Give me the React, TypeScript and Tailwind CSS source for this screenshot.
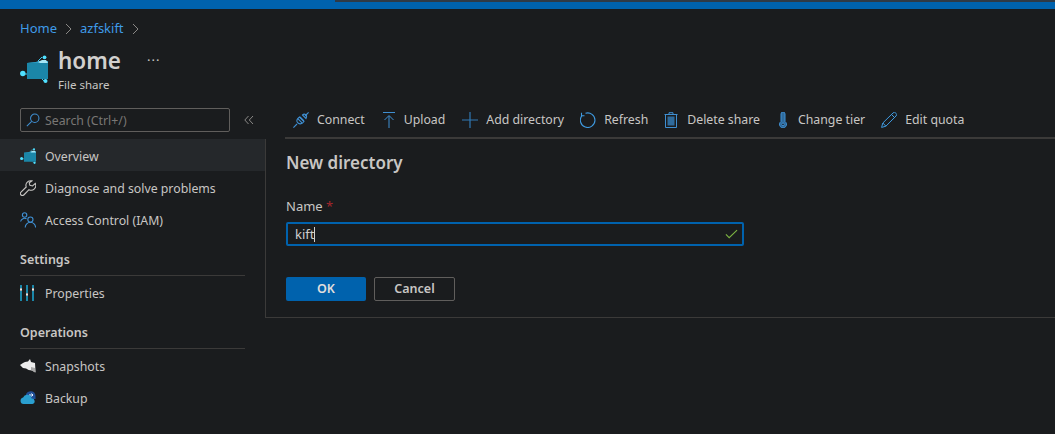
const ShareIcon = ({ className }: { className: string }) => (
  <svg viewBox="0 0 28 28" className={className}>
    <path d="M2 19h8M18 6l4-4M22 24l2 2" stroke="#3ec6ea" strokeWidth="1" fill="none" />
    <path d="M7 8l9-1 3-1h9v18H7z" fill="#1b86a8" />
    <path d="M7 8l9-1 3-1h9v2H7z" fill="#2a9cc4" />
    <path d="M18 7l4-2h4l2 3h-8z" fill="#a6e6f5" />
    <circle cx="2.800" cy="18.500" r="2.700" fill="#50e0ff" />
    <circle cx="24.500" cy="2.300" r="1.900" fill="#50e0ff" />
    <circle cx="25.500" cy="26" r="2" fill="#50e0ff" />
  </svg>
);

const WrenchIcon = () => (
  <svg viewBox="0 0 16 16" className="h-4 w-4" fill="none" stroke="#c8c6c4" strokeWidth="1.100">
    <path d="M10.500.7a4.700 4.700 0 0 0-4.300 6.300L1 12.200a1.900 1.900 0 0 0 2.800 2.800l5.200-5.300a4.700 4.700 0 0 0 6.300-6.300l-2.700 2.600-2.700-.6-.7-2.600L11.900.9a4.700 4.700 0 0 0-1.400-.2z" />
  </svg>
);

const PeopleIcon = () => (
  <svg viewBox="0 0 16 16" className="h-4 w-4" fill="none" stroke="#3f8fd2" strokeWidth="1.100">
    <circle cx="4.600" cy="3" r="2.200" />
    <path d="M.6 9.500a4 4 0 0 1 6-2.600" />
    <circle cx="10.400" cy="7.600" r="2.600" />
    <path d="M5.200 15.500a5.200 5.200 0 0 1 10.400 0" />
  </svg>
);

const SlidersIcon = () => (
  <svg viewBox="0 0 14 16" className="h-4 w-[14px]">
    <path d="M1 0v3M1 6v10M7 0v8M7 11v5M13 0v3M13 6v10" stroke="#1b86a8" strokeWidth="2" />
    <path d="M0 4.500h2M6 9.500h2M12 4.500h2" stroke="#e8e8e8" strokeWidth="1.600" />
    <path d="M1 3v3M7 8v3M13 3v3" stroke="#e8e8e8" strokeWidth="1.200" />
  </svg>
);

const SnapshotIcon = () => (
  <svg viewBox="0 0 16 14" className="h-[14px] w-4">
    <path d="M0 6l3-2 2-1 3-.5L10 0l1 3 4 1 .6 9.500-3.500-2-3.500-.5-2.500-1.500L3 9z" fill="#ececec" />
    <path d="M11 8l4 1v4.500l-4-2.500z" fill="#a8a8a8" />
  </svg>
);

const BackupIcon = () => (
  <svg viewBox="0 0 16 13" className="h-[13px] w-4">
    <path d="M6 3a5 5 0 0 1 9.500 2v3H6z" fill="#1f4e96" />
    <path d="M9 4h4M11.500 2.500 13 4l-1.500 1.500" stroke="#e8f4ff" strokeWidth="1" fill="none" />
    <path d="M3.500 13a3.300 3.300 0 0 1-.4-6.500 4.400 4.400 0 0 1 8.400 1A2.800 2.800 0 0 1 12.500 13z" fill="#2a9fd0" />
  </svg>
);

const ConnectIcon = () => (
  <svg viewBox="0 0 16 16" className="h-4 w-4" fill="none" stroke="#3f8fd2" strokeWidth="1.100">
    <path d="M.4 15.600 4 12M12 4l3.600-3.600" />
    <path d="M6.500 5 11 9.500c-1.500 2-4 3-6 1.500S3.500 7 6.500 5z" />
    <path d="M9.500 3 13 6.500c1-2 .8-3-.2-3.800S10.500 2 9.500 3z" />
    <path d="M5 6.800l4 4M7 5l4 4" />
  </svg>
);

const UploadIcon = () => (
  <svg viewBox="0 0 12 16" className="h-4 w-3" fill="none" stroke="#3f8fd2" strokeWidth="1">
    <path d="M0 .5h12M6 16V4M1.500 8 6 3.500 10.500 8" />
  </svg>
);

const PlusIcon = () => (
  <svg viewBox="0 0 16 16" className="h-4 w-4" fill="none" stroke="#3078b4" strokeWidth="1.200">
    <path d="M8 0v16M0 8h16" />
  </svg>
);

const RefreshIcon = () => (
  <svg viewBox="0 0 16 16" className="h-4 w-4" fill="none" stroke="#3f9ae0" strokeWidth="1.100">
    <path d="M5.500 1.200a7.300 7.300 0 1 1-3.600 2.500" />
    <path d="M1.500.8v3h3" />
  </svg>
);

const TrashIcon = () => (
  <svg viewBox="0 0 14 16" className="h-4 w-[14px]" fill="none" stroke="#3f8fd2" strokeWidth="1">
    <path d="M.5 2.500h13M5 2.500V.7h4v1.800" />
    <path d="M1.500 2.500h11v13h-11z" />
    <path d="M3.500 4.500h7v9h-7z" fill="#2f6b9c" stroke="none" />
  </svg>
);

const ThermoIcon = () => (
  <svg viewBox="0 0 10 16" className="h-4 w-[10px]" fill="none" stroke="#3f8fd2" strokeWidth="1">
    <path d="M3 9.500V2a2 2 0 0 1 4 0v7.500a3.500 3.500 0 1 1-4 0z" fill="#2f6b9c" />
    <circle cx="5" cy="12.300" r="1.300" fill="#1a1c1e" />
  </svg>
);

const PencilIcon = () => (
  <svg viewBox="0 0 16 16" className="h-4 w-4" fill="none" stroke="#3f9ae0" strokeWidth="1">
    <path d="M.6 15.400l1.200-4.400L12 1a1.800 1.800 0 0 1 2.700 0l.3.3a1.800 1.800 0 0 1 0 2.700L4.900 14.200z" />
    <path d="M1.800 11l3.100 3.200M10.500 2.500l3 3" />
  </svg>
);

const NavRow = ({ icon, label, active }: { icon: React.ReactNode; label: string; active?: boolean }) => (
  <div className={active ? "flex h-8 items-center bg-[#25282b] pl-5" : "flex h-8 items-center pl-5"}>
    <span className="flex w-[25px] shrink-0 items-center pt-[1px]">{icon}</span>
    <span className="pt-[4px]">{label}</span>
  </div>
);

const SideHeading = ({ label }: { label: string }) => (
  <div className="mx-5 mt-[15px] h-[26px] border-b border-[#3b3a39] pt-[1px] text-[12.5px] font-semibold leading-[18px]">
    {label}
  </div>
);

const tools: { icon: React.ReactNode; label: string; gap: string; ml: string }[] = [
  { icon: <ConnectIcon />, label: "Connect", gap: "gap-[8px]", ml: "ml-[8px]" },
  { icon: <UploadIcon />, label: "Upload", gap: "gap-[9px]", ml: "ml-[18px]" },
  { icon: <PlusIcon />, label: "Add directory", gap: "gap-[8px]", ml: "ml-[17px]" },
  { icon: <RefreshIcon />, label: "Refresh", gap: "gap-[8px]", ml: "ml-[16px]" },
  { icon: <TrashIcon />, label: "Delete share", gap: "gap-[9px]", ml: "ml-[16px]" },
  { icon: <ThermoIcon />, label: "Change tier", gap: "gap-[10px]", ml: "ml-[18px]" },
  { icon: <PencilIcon />, label: "Edit quota", gap: "gap-[8px]", ml: "ml-[16px]" },
];

export default function App() {
  return (
    <div
      className="h-[434px] w-[1055px] overflow-hidden bg-[#1a1c1e] text-[12.3px] text-[#c8c6c4]"
      style={{ fontFamily: '"Noto Sans", sans-serif' }}
    >
      <div className="relative h-[9px] bg-[#0062ad]">
        <div className="absolute right-0 top-0 h-[2px] w-[720px] bg-[#2f3a46]" />
      </div>

      <div className="flex h-[38px] items-center pl-5 pt-[1px] text-[13px] text-[#3f9be8]">
        <span>Home</span>
        <svg viewBox="0 0 8 12" className="ml-[8px] mr-[7px] h-3 w-2" fill="none" stroke="#8a8886">
          <path d="M1 1l5 5-5 5" />
        </svg>
        <span>azfskift</span>
        <svg viewBox="0 0 8 12" className="mx-[8px] h-3 w-2" fill="none" stroke="#8a8886">
          <path d="M1 1l5 5-5 5" />
        </svg>
      </div>

      <div className="flex h-[53px] pl-5">
        <div className="flex w-[38px] items-start pt-[8px]">
          <ShareIcon className="h-7 w-7" />
        </div>
        <div>
          <div className="flex items-center">
            <span className="text-[22.5px] font-semibold leading-[28px] text-[#d2d0ce]">home</span>
            <span className="ml-[26px] text-[13px] tracking-[1px] text-[#c8c6c4]">···</span>
          </div>
          <div className="mt-[2px] text-[11.5px] leading-[16px]">File share</div>
        </div>
      </div>

      <div className="flex">
        <aside className="w-[265px] shrink-0">
          <div className="flex h-[39px] items-start pl-5 pt-[8px]">
            <div className="flex h-[24px] w-[210px] items-center rounded-[2px] border border-[#605e5c] pl-[5px] text-[#797775]">
              <svg viewBox="0 0 16 16" className="h-[14px] w-[14px]" fill="none" stroke="#3f8fd2" strokeWidth="1.200">
                <circle cx="10" cy="6" r="4.800" />
                <path d="M6.500 9.500 1 15" />
              </svg>
              <span className="ml-[5px] pt-[2px]">Search (Ctrl+/)</span>
            </div>
            <svg viewBox="0 0 10 10" className="ml-[14px] mt-[7px] h-[10px] w-[10px]" fill="none" stroke="#8a8886">
              <path d="M4.500 1 .8 5l3.700 4M9 1 5.300 5 9 9" />
            </svg>
          </div>
          <NavRow active icon={<ShareIcon className="h-4 w-4" />} label="Overview" />
          <NavRow icon={<WrenchIcon />} label="Diagnose and solve problems" />
          <NavRow icon={<PeopleIcon />} label="Access Control (IAM)" />
          <SideHeading label="Settings" />
          <NavRow icon={<SlidersIcon />} label="Properties" />
          <SideHeading label="Operations" />
          <NavRow icon={<SnapshotIcon />} label="Snapshots" />
          <NavRow icon={<BackupIcon />} label="Backup" />
        </aside>

        <main className="min-w-0 flex-1">
          <div className="ml-5 flex h-[39px] items-center border-b-2 border-[#3b3a39] pt-[2px]">
            {tools.map((t) => (
              <div key={t.label} className={`flex items-center ${t.gap} ${t.ml}`}>
                {t.icon}
                <span className="pt-[2px]">{t.label}</span>
              </div>
            ))}
          </div>
          <div className="h-[179px] border-b border-l border-[#3b3a39] pl-5">
            <div className="pt-[12px] text-[17px] font-semibold leading-[24px]">New directory</div>
            <div className="mt-[21px] text-[13px] leading-[20px]">
              Name <span className="text-[#a4262c]">*</span>
            </div>
            <div className="mt-[6px] flex h-[24px] w-[458px] items-center justify-between rounded-[2px] border-2 border-[#0062ad] pl-[7px] pr-[4px] text-[13px] text-[#d2d0ce]">
              <span className="border-r border-[#d2d0ce] leading-[15px]">kift</span>
              <svg viewBox="0 0 14 10" className="h-[10px] w-[13px]" fill="none" stroke="#7cb342" strokeWidth="1.200">
                <path d="M1 5.500 4.500 9 13 .8" />
              </svg>
            </div>
            <div className="mt-[31px] flex gap-2">
              <button className="h-[24px] w-[80px] rounded-[2px] bg-[#0062ad] text-[12.5px] font-semibold text-[#e1dfdd]">
                OK
              </button>
              <button className="h-[24px] w-[81px] rounded-[2px] border border-[#605e5c] text-[12.5px] font-semibold text-[#c8c6c4]">
                Cancel
              </button>
            </div>
          </div>
        </main>
      </div>
    </div>
  );
}
